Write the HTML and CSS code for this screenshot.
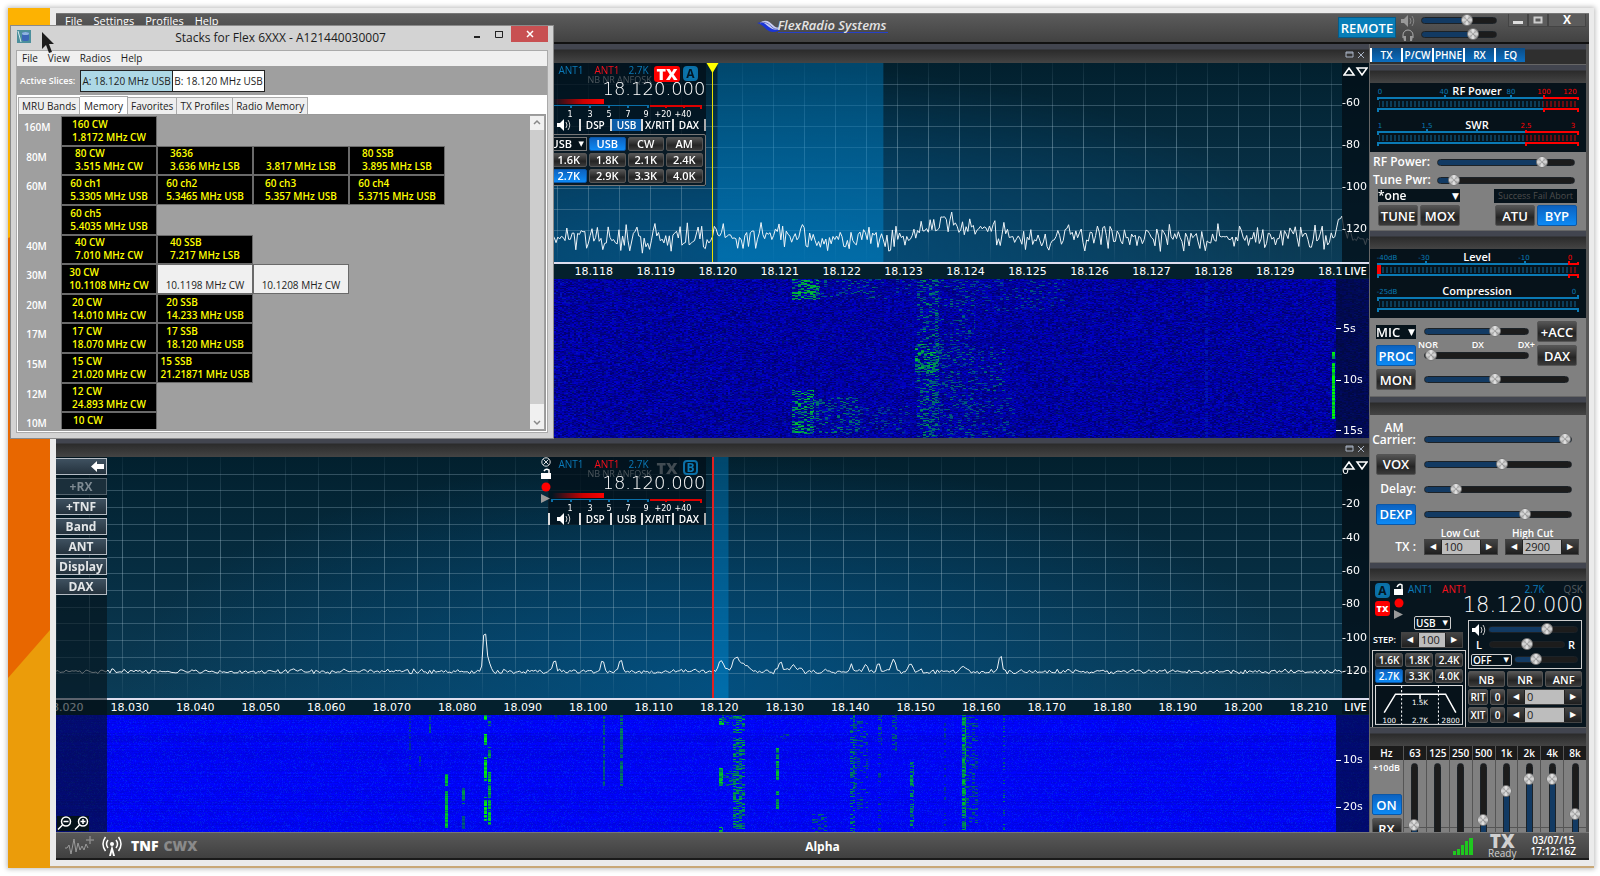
FILE: index.html
```html
<!DOCTYPE html>
<html lang="en">
<head>
<meta charset="utf-8">
<title>FlexRadio Systems</title>
<link rel="stylesheet" href="styles.css">
</head>
<body>
<div class="desktop">
  <svg class="wallpaper" viewBox="0 0 42 860" preserveAspectRatio="none" aria-hidden="true">
    <rect width="42" height="860" fill="#eb9c0a"/><path d="M0 0H42V622L0 670Z" fill="#e86700"/><path d="M0 0H42V215L0 230Z" fill="#fdb202"/>
  </svg>
  <div class="frame">
  <main class="app">
    <header class="titlebar">
      <nav class="app-menu"><a href="#">File</a><a href="#">Settings</a><a href="#">Profiles</a><a href="#">Help</a></nav>
      <div class="brand">
        <svg width="24" height="14" viewBox="0 0 24 14" aria-hidden="true"><path d="M0 3C5 1 9 3 13 6S20 10 24 9C20 13 13 13 9 9S4 4 0 3Z" fill="#1a35d8"/><path d="M4 2C9-1 13 2 16 5S21 8 24 7C21 11 16 10 12 7S8 3 4 2Z" fill="#c9cdf0"/><path d="M3 3C8 1 12 4 15 7S20 9 23 9" stroke="#6b74c8" fill="none"/></svg>
        <span>FlexRadio Systems</span>
      </div>
      <div class="title-right">
        <button class="remote">REMOTE</button>
        <div class="volumes">
          <svg width="14" height="12" viewBox="0 0 14 12" aria-hidden="true"><path d="M0 4H3L7 0V12L3 8H0Z" fill="#999"/><path d="M9 3Q11 6 9 9M11 1Q14.500 6 11 11" stroke="#888" fill="none"/></svg>
          <input type="range" aria-label="Speaker volume" value="63" style="--v:63">
          <svg width="14" height="12" viewBox="0 0 14 12" aria-hidden="true"><path d="M2 9V6A5 5 0 0 1 12 6V9" stroke="#aaa" fill="none"/><path d="M2 7H5V12H3ZM12 7H9V12H11Z" fill="#999"/></svg>
          <input type="range" aria-label="Headphone volume" value="73" style="--v:73">
        </div>
        <div class="win-buttons">
          <button aria-label="Minimize"><svg width="12" height="10" viewBox="0 0 12 10"><path d="M1 7.500H11" stroke="#ddd" stroke-width="3"/></svg></button><button aria-label="Maximize"><svg width="12" height="10" viewBox="0 0 12 10"><path d="M2.500 2.500H9.500V7.500H2.500Z" stroke="#ccc" stroke-width="2" fill="none"/></svg></button><button class="wide">X</button>
        </div>
      </div>
    </header>

    <div class="workspace">
      <section class="pan" id="pan-a">
        <header class="bar"><button aria-label="Pop out"><svg width="9" height="8" viewBox="0 0 9 8"><path d="M1 1H8V6H1ZM1 2H8" stroke="#a9b3c4" fill="none"/></svg></button><button aria-label="Close"><svg width="9" height="8" viewBox="0 0 9 8"><path d="M1 1L7 7M7 1L1 7" stroke="#a9b3c4" fill="none"/></svg></button></header>
        <div class="pan-body">
          <div class="plot">
            <canvas></canvas>
            <div class="flag">
              <div class="flag-top">
                <span class="blue">ANT1</span><span class="red">ANT1</span><span class="blue">2.7K</span>
                <small>NB NR ANFQSK</small>
                <b class="tx on">TX</b><b class="badge solid">A</b>
              </div>
              <div class="freq">18.120.000</div>
              <div class="smeter"></div>
              <svg class="sscale" width="158" height="14" viewBox="0 0 158 14"><path d="M4 3V0H100V3M23 0V3M42 0V3M61 0V3M80 0V3" stroke="#0a6fa8" stroke-width="2" fill="none"/><path d="M102 1H153V4M118 1V3M136 1V3" stroke="#d00" stroke-width="2" fill="none"/><g class="snum"><text x="22" y="12">1</text><text x="42" y="12">3</text><text x="61" y="12">5</text><text x="80" y="12">7</text><text x="98" y="12">9</text><text x="115" y="12">+20</text><text x="135" y="12">+40</text></g></svg>
              <div class="flag-tabs"><button aria-label="Audio"><svg width="14" height="12" viewBox="0 0 14 12"><path d="M0 4H3L7 0V12L3 8H0Z" fill="#fff"/><path d="M9 3Q11 6 9 9M11 1Q14.500 6 11 11" stroke="#ccc" fill="none"/></svg></button><button>DSP</button><button class="on">USB</button><button>X/RIT</button><button>DAX</button></div>
              <div class="mode-menu">
                <label class="sel dark"><select aria-label="Mode"><option>USB</option></select></label><button class="btn on">USB</button><button class="btn">CW</button><button class="btn">AM</button>
                <button class="btn">1.6K</button><button class="btn">1.8K</button><button class="btn">2.1K</button><button class="btn">2.4K</button>
                <button class="btn on">2.7K</button><button class="btn">2.9K</button><button class="btn">3.3K</button><button class="btn">4.0K</button>
              </div>
            </div>
            <div class="scale"><div class="updown"><svg width="25" height="9" viewBox="0 0 25 9"><path d="M6 1L11 8H1ZM19 8L24 1H14Z" stroke="#fff" stroke-width="1.500" fill="none"/></svg></div></div>
          </div>
          <div class="ruler"><span class="live">LIVE</span></div>
          <div class="fall"><canvas></canvas><div class="times"></div></div>
        </div>
      </section>

      <section class="pan" id="pan-b">
        <header class="bar"><button aria-label="Pop out"><svg width="9" height="8" viewBox="0 0 9 8"><path d="M1 1H8V6H1ZM1 2H8" stroke="#a9b3c4" fill="none"/></svg></button><button aria-label="Close"><svg width="9" height="8" viewBox="0 0 9 8"><path d="M1 1L7 7M7 1L1 7" stroke="#a9b3c4" fill="none"/></svg></button></header>
        <div class="pan-body">
          <div class="plot">
            <canvas></canvas>
            <div class="flag">
              <svg class="flag-icons" width="12" height="48" viewBox="0 0 12 48"><circle cx="6" cy="5" r="4.200" stroke="#ddd" fill="none"/><path d="M3.500 2.500L8.500 7.500M8.500 2.500L3.500 7.500" stroke="#ddd"/><path d="M4 14Q6 11 9 13V17" stroke="#fff" stroke-width="1.500" fill="none"/><rect x="1" y="16" width="10" height="6" fill="#fff"/><circle cx="6" cy="30" r="4.500" fill="#f00"/><path d="M1 37L10 41.500L1 46Z" fill="#999"/></svg>
              <div class="flag-top">
                <span class="blue">ANT1</span><span class="red">ANT1</span><span class="blue">2.7K</span>
                <small>NB NR ANFQSK</small>
                <b class="tx">TX</b><b class="badge">B</b>
              </div>
              <div class="freq">18.120.000</div>
              <div class="smeter"></div>
              <svg class="sscale" width="158" height="14" viewBox="0 0 158 14"><path d="M4 3V0H100V3M23 0V3M42 0V3M61 0V3M80 0V3" stroke="#0a6fa8" stroke-width="2" fill="none"/><path d="M102 1H153V4M118 1V3M136 1V3" stroke="#d00" stroke-width="2" fill="none"/><g class="snum"><text x="22" y="12">1</text><text x="42" y="12">3</text><text x="61" y="12">5</text><text x="80" y="12">7</text><text x="98" y="12">9</text><text x="115" y="12">+20</text><text x="135" y="12">+40</text></g></svg>
              <div class="flag-tabs"><button aria-label="Audio"><svg width="14" height="12" viewBox="0 0 14 12"><path d="M0 4H3L7 0V12L3 8H0Z" fill="#fff"/><path d="M9 3Q11 6 9 9M11 1Q14.500 6 11 11" stroke="#ccc" fill="none"/></svg></button><button>DSP</button><button>USB</button><button>X/RIT</button><button>DAX</button></div>
            </div>
            <div class="scale"><div class="updown"><svg width="25" height="9" viewBox="0 0 25 9"><path d="M6 1L11 8H1ZM19 8L24 1H14Z" stroke="#fff" stroke-width="1.500" fill="none"/></svg></div></div>
          </div>
          <div class="ruler"><span class="live">LIVE</span></div>
          <div class="fall"><canvas></canvas><div class="times"></div></div>
          <div class="tools">
            <button class="arrow" aria-label="Collapse"><svg width="13" height="11" viewBox="0 0 13 11"><path d="M0 5.500L6 0V3H13V8H6V11Z" fill="#fff"/></svg></button>
            <button disabled>+RX</button><button>+TNF</button><button>Band</button><button>ANT</button><button>Display</button><button>DAX</button>
            <svg class="zooms" width="32" height="15" viewBox="0 0 32 15"><g stroke="#fff" stroke-width="1.500" fill="none"><circle cx="9" cy="5.500" r="4.500"/><path d="M6.500 5.500H11.500M5.500 9L1 13.500"/><circle cx="26" cy="5.500" r="4.500"/><path d="M23.500 5.500H28.500M26 3V8M22.500 9L18 13.500"/></g></svg>
          </div>
        </div>
      </section>

      <aside class="side">
        <nav class="side-tabs"><button>TX</button><button>P/CW</button><button>PHNE</button><button>RX</button><button>EQ</button></nav>
        <div class="bar"></div>
        <svg class="meters" viewBox="0 0 216 69">
          <defs><pattern id="tick" width="4" height="6" patternUnits="userSpaceOnUse"><rect width="2" height="6" fill="#0b3c58"/></pattern><pattern id="tickr" width="4" height="6" patternUnits="userSpaceOnUse"><rect width="2" height="6" fill="#6a0c10"/></pattern></defs>
          <g stroke="#0a7ab5" stroke-width="2" fill="none"><path d="M8 17V14M8 15H173M75 12V15M141 12V15M8 29V26H173"/><path d="M8 52V48M8 49H155M57 46V49M107 46V49M8 63V60H155"/></g>
          <g stroke="#f00" stroke-width="2" fill="none"><path d="M173 15H208V17M174 12V15M173 26H208V29M174 26V29"/><path d="M155 49H208V52M156 47V49M155 60H208V63M156 60V63"/></g>
          <rect x="9" y="18" width="164" height="6" fill="url(#tick)"/><rect x="173" y="18" width="34" height="6" fill="url(#tickr)"/>
          <rect x="9" y="52" width="146" height="6" fill="url(#tick)"/><rect x="155" y="52" width="52" height="6" fill="url(#tickr)"/>
          <g class="mnum"><text x="10" y="11">0</text><text x="74" y="11">40</text><text x="141" y="11">80</text><text x="10" y="45">1</text><text x="57" y="45">1.5</text></g>
          <g class="mnum hot"><text x="174" y="11">100</text><text x="200" y="11">120</text><text x="156" y="45">2.5</text><text x="203" y="45">3</text></g>
          <g class="mtitle"><text x="107" y="12">RF Power</text><text x="107" y="46">SWR</text></g>
        </svg>
        <div class="panel tx-panel">
          <div class="line"><label for="rfp">RF Power:</label><input id="rfp" type="range" value="79" style="--v:79"></div>
          <div class="line"><label for="tnp">Tune Pwr:</label><input id="tnp" type="range" value="8" style="--v:8"></div>
          <div class="split low"><label class="sel black"><select aria-label="TX profile"><option>*one</option></select></label><span class="atu-state">Success Fail Abort</span></div>
          <div class="split"><span><button class="btn">TUNE</button><button class="btn">MOX</button></span><span><button class="btn">ATU</button><button class="btn on">BYP</button></span></div>
        </div>
        <div class="bar"></div>
        <svg class="meters" viewBox="0 0 216 69">
          <g stroke="#0a7ab5" stroke-width="2" fill="none"><path d="M8 18V14M8 15H199M56 12V15M155 12V15M8 29V26H198"/><path d="M8 52V48M8 49H208V46M8 63V60H208V63"/></g>
          <path d="M199 12V15H208V13M199 29V26H208V29" stroke="#f00" stroke-width="2" fill="none"/>
          <rect x="9" y="18" width="190" height="6" fill="url(#tick)"/><rect x="199" y="18" width="9" height="6" fill="url(#tickr)"/><rect x="7" y="16" width="4" height="9" fill="#f00"/>
          <rect x="9" y="52" width="199" height="6" fill="url(#tick)"/>
          <g class="mnum"><text x="17" y="11">-40dB</text><text x="54" y="11">-30</text><text x="154" y="11">-10</text><text x="17" y="45">-25dB</text><text x="204" y="45">0</text></g>
          <g class="mnum hot"><text x="200" y="11">0</text></g>
          <g class="mtitle"><text x="107" y="12">Level</text><text x="107" y="46">Compression</text></g>
        </svg>
        <div class="panel mic-panel">
          <label class="sel black"><select aria-label="Input"><option>MIC</option></select></label><input type="range" aria-label="Mic level" value="70" style="--v:70"><button class="btn">+ACC</button>
          <button class="btn on">PROC</button><div class="proc"><div><span>NOR</span><span>DX</span><span>DX+</span></div><input type="range" aria-label="Processor" value="0" style="--v:0"></div><button class="btn">DAX</button>
          <button class="btn">MON</button><input class="long" type="range" aria-label="Monitor level" value="49" style="--v:49">
        </div>
        <div class="bar"></div>
        <div class="panel phone-panel">
          <label class="am" for="amc">AM<br>Carrier:</label><input class="am-range" id="amc" type="range" value="100" style="--v:100">
          <button class="btn">VOX</button><input type="range" aria-label="VOX level" value="53" style="--v:53">
          <label for="dly">Delay:</label><input id="dly" type="range" value="19" style="--v:19">
          <button class="btn on">DEXP</button><input type="range" aria-label="DEXP level" value="70" style="--v:70">
          <div class="cuts"><label for="lc">Low Cut</label><label for="hc">High Cut</label></div>
          <span class="txl">TX :</span><div class="cut-row"><div class="spin"><button aria-label="Lower">◀</button><input id="lc" value="100"><button aria-label="Raise">▶</button></div><div class="spin"><button aria-label="Lower">◀</button><input id="hc" value="2900"><button aria-label="Raise">▶</button></div></div>
        </div>
        <div class="bar"></div>
        <div class="rx-panel">
          <div class="rx-head">
            <div class="rx-badges"><b class="badge solid">A</b><b class="tx on">TX</b></div>
            <svg width="12" height="38" viewBox="0 0 12 38"><path d="M4 4Q6 0 9 2V7" stroke="#fff" stroke-width="1.500" fill="none"/><rect x="1" y="6" width="9" height="6" fill="#fff"/><circle cx="6" cy="20" r="4.500" fill="#f00"/><path d="M1 27L10 31.500L1 36Z" fill="#999"/></svg>
            <div class="rx-info"><div class="rx-ants"><span class="blue">ANT1</span><span class="red">ANT1</span><span class="blue bw">2.7K</span><span class="gray">QSK</span></div><div class="freq big">18.120.000</div></div>
          </div>
          <div class="rx-cols">
            <div class="rx-left">
              <label class="sel line-sel"><select aria-label="RX mode"><option>USB</option></select></label>
              <div class="step"><label for="stp">STEP:</label><div class="spin"><button aria-label="Lower">◀</button><input id="stp" value="100"><button aria-label="Raise">▶</button></div></div>
              <div class="filters">
                <button class="btn">1.6K</button><button class="btn">1.8K</button><button class="btn">2.4K</button><button class="btn on">2.7K</button><button class="btn">3.3K</button><button class="btn">4.0K</button>
                <svg viewBox="0 0 86 39"><rect x="0.500" y="0.500" width="85" height="38" fill="#06121a" stroke="#ddd"/><path d="M26 1V38M62 1V38" stroke="#fff" stroke-dasharray="2 2"/><path d="M9 27L20 9H69L79 27M44 9V14" stroke="#fff" stroke-width="1.500" fill="none"/><g class="fnum"><text x="44" y="20">1.5K</text><text x="14" y="37">100</text><text x="44" y="37">2.7K</text><text x="74" y="37">2800</text></g></svg>
              </div>
            </div>
            <div class="rx-right">
              <div class="audio">
                <svg width="14" height="12" viewBox="0 0 14 12"><path d="M0 4H3L7 0V12L3 8H0Z" fill="#fff"/><path d="M9 3Q11 6 9 9M11 1Q14.500 6 11 11" stroke="#ccc" fill="none"/></svg><input type="range" aria-label="RX volume" value="68" style="--v:68">
                <div class="panrow"><span>L</span><input type="range" class="balance" aria-label="Balance" value="50" style="--v:0"><span>R</span></div>
                <label class="sel line-sel"><select aria-label="AGC"><option>OFF</option></select></label><input type="range" aria-label="AGC level" value="30" style="--v:30">
              </div>
              <div class="three"><button class="btn">NB</button><button class="btn">NR</button><button class="btn">ANF</button></div>
              <div class="rit"><button class="btn">RIT</button><button class="btn">0</button><div class="spin"><button aria-label="Lower">◀</button><input aria-label="RIT offset" value="0"><button aria-label="Raise">▶</button></div></div>
              <div class="rit"><button class="btn">XIT</button><button class="btn">0</button><div class="spin"><button aria-label="Lower">◀</button><input aria-label="XIT offset" value="0"><button aria-label="Raise">▶</button></div></div>
            </div>
          </div>
        </div>
        <div class="bar"></div>
        <div class="eq">
          <div class="eq-col first"><span>Hz</span><small>+10dB</small><button class="btn on">ON</button><button class="btn">RX</button></div>
          <div class="eq-col"><label for="e1">63</label><input id="e1" type="range" value="53" style="--v:53"></div>
          <div class="eq-col"><label for="e2">125</label><input id="e2" type="range" value="20" style="--v:20"></div>
          <div class="eq-col"><label for="e3">250</label><input id="e3" type="range" value="20" style="--v:20"></div>
          <div class="eq-col"><label for="e4">500</label><input id="e4" type="range" value="58" style="--v:58"></div>
          <div class="eq-col"><label for="e5">1k</label><input id="e5" type="range" value="82" style="--v:82"></div>
          <div class="eq-col"><label for="e6">2k</label><input id="e6" type="range" value="92" style="--v:92"></div>
          <div class="eq-col"><label for="e7">4k</label><input id="e7" type="range" value="92" style="--v:92"></div>
          <div class="eq-col"><label for="e8">8k</label><input id="e8" type="range" value="63" style="--v:63"></div>
        </div>
      </aside>
    </div>

    <footer class="status">
      <div class="status-left">
        <svg width="32" height="22" viewBox="0 0 32 22" aria-hidden="true"><path d="M1 13H3L5 10L7 19L10 4L12 17L14 8L16 15L18 11L20 15L22 9L24 13" stroke="#999" fill="none"/><path d="M22 5H30M26 1V9" stroke="#888" stroke-width="1.500"/></svg>
        <svg width="22" height="22" viewBox="0 0 22 22" aria-hidden="true"><path d="M11 10L14 21H12L11 17L10 21H8Z" fill="#fff"/><circle cx="11" cy="9" r="2" fill="#fff"/><path d="M7 13Q4 9 7 5M15 13Q18 9 15 5M4.500 16Q-0.500 9 4.500 2M17.500 16Q22.500 9 17.500 2" stroke="#fff" stroke-width="1.500" fill="none"/></svg>
        <b>TNF</b><b class="off">CWX</b>
      </div>
      <div class="station">Alpha</div>
      <div class="status-right">
        <svg width="21" height="18" viewBox="0 0 21 18" aria-hidden="true"><path d="M0 14H3V18H0ZM4 12H7V18H4ZM8 8H11V18H8ZM12 4H15V18H12ZM16 1H20V18H16Z" fill="#1fc81f"/></svg>
        <div class="ready"><b>TX</b><span>Ready</span></div>
        <div class="clock">03/07/15<br>17:12:16Z</div>
      </div>
    </footer>
  </main>
  </div>

  <section class="stacks">
    <header class="st-title">
      <svg width="14" height="13" viewBox="0 0 14 13" aria-hidden="true"><rect width="14" height="13" fill="#4c8f9c"/><rect x="5" y="2" width="7" height="9" rx="2" fill="#3b66b8"/><ellipse cx="8.500" cy="3.500" rx="3.500" ry="1.500" fill="#8fb4e0"/><path d="M1 1L4 12" stroke="#d5ecef"/></svg>
      <h1>Stacks for Flex 6XXX - A121440030007</h1>
      <button aria-label="Minimize"><svg width="10" height="10" viewBox="0 0 10 10"><path d="M2 8H8" stroke="#222" stroke-width="2"/></svg></button><button aria-label="Maximize"><svg width="10" height="10" viewBox="0 0 10 10"><path d="M1 2.500H9M1.500 2V8.500H8.500V2" stroke="#222" fill="none"/></svg></button><button class="x" aria-label="Close"><svg width="8" height="8" viewBox="0 0 8 8"><path d="M1 1L7 7M7 1L1 7" stroke="#fff" stroke-width="1.500"/></svg></button>
    </header>
    <div class="st-body">
      <nav class="st-menu"><a href="#">File</a><a href="#">View</a><a href="#">Radios</a><a href="#">Help</a></nav>
      <div class="slices"><span>Active Slices:</span><button class="cur">A: 18.120 MHz USB</button><button>B: 18.120 MHz USB</button></div>
      <div class="tabs" role="tablist"><button role="tab">MRU Bands</button><button role="tab" class="cur">Memory</button><button role="tab">Favorites</button><button role="tab">TX Profiles</button><button role="tab">Radio Memory</button></div>
      <div class="mem-view">
        <div class="mem-clip"><div class="mem-list">
          <div><span>160M</span><button><i>160 CW<br>1.8172 MHz CW</i></button></div>
          <div><span>80M</span><button><i>80 CW<br>3.515 MHz CW</i></button><button><i>3636<br>3.636 MHz LSB</i></button><button><i>&nbsp;<br>3.817 MHz LSB</i></button><button><i>80 SSB<br>3.895 MHz LSB</i></button></div>
          <div><span>60M</span><button><i>60 ch1<br>5.3305 MHz USB</i></button><button><i>60 ch2<br>5.3465 MHz USB</i></button><button><i>60 ch3<br>5.357 MHz USB</i></button><button><i>60 ch4<br>5.3715 MHz USB</i></button></div>
          <div><span></span><button><i>60 ch5<br>5.4035 MHz USB</i></button></div>
          <div><span>40M</span><button><i>40 CW<br>7.010 MHz CW</i></button><button><i>40 SSB<br>7.217 MHz LSB</i></button></div>
          <div><span>30M</span><button><i>30 CW<br>10.1108 MHz CW</i></button><button class="plain"><i>&nbsp;<br>10.1198 MHz CW</i></button><button class="plain"><i>&nbsp;<br>10.1208 MHz CW</i></button></div>
          <div><span>20M</span><button><i>20 CW<br>14.010 MHz CW</i></button><button><i>20 SSB<br>14.233 MHz USB</i></button></div>
          <div><span>17M</span><button><i>17 CW<br>18.070 MHz CW</i></button><button><i>17 SSB<br>18.120 MHz USB</i></button></div>
          <div><span>15M</span><button><i>15 CW<br>21.020 MHz CW</i></button><button><i>15 SSB<br>21.21871 MHz USB</i></button></div>
          <div><span>12M</span><button><i>12 CW<br>24.893 MHz CW</i></button></div>
          <div><span>10M</span><button><i>10 CW<br>&nbsp;</i></button></div>
        </div></div>
        <div class="sbar"><svg width="14" height="14" viewBox="0 0 14 14"><path d="M4 8L7 5L10 8" stroke="#888" stroke-width="1.500" fill="none"/></svg><div></div><svg width="14" height="25" viewBox="0 0 14 25"><path d="M4 17L7 20L10 17" stroke="#888" stroke-width="1.500" fill="none"/></svg></div>
      </div>
    </div>
  </section>
  <svg class="cursor" width="14" height="24" viewBox="0 0 14 24" aria-hidden="true"><path d="M1 1V18L5 14L8 22L11 21L8 13H13Z" fill="#1c1c1c"/></svg>
</div>
<script src="panadapter.js"></script>
</body>
</html>
```
FILE: styles.css
```css
* { box-sizing: border-box; }
body { margin: 0; background: #fff; font-family: "Open Sans", "Noto Sans", sans-serif; font-size: 13px; color: #fff; overflow: hidden; }
button, input, select { font: inherit; color: inherit; border: 0; padding: 0; margin: 0; min-width: 0; }
a { color: inherit; text-decoration: none; }
svg { display: block; flex: none; }
canvas { display: block; position: absolute; inset: 0; width: 100%; height: 100%; }

.desktop { position: relative; height: calc(100vh - 16px); margin: 8px 6px 8px 8px; padding: 0 0 2px 42px; background: #c9a877; box-shadow: 0 0 5px 1px #bbb; }
.wallpaper { position: absolute; left: 0; top: 0; width: 42px; height: 100%; }
.frame { height: 100%; padding: 5px 5px 6px 6px; background: #ebebeb; }
.app { display: flex; flex-direction: column; height: 100%; background: #333; }

.titlebar { flex: none; height: 31px; display: grid; grid-template-columns: 1fr auto 1fr; background: linear-gradient(#5b5b5b, #424242); border-bottom: 2px solid #111; border-top: 1px solid #777; }
.app-menu { display: flex; gap: 11px; padding-left: 9px; font-size: 11px; line-height: 14px; }
.brand { display: flex; height: 22px; padding-top: 2px; }
.brand svg { margin-top: 4px; }
.brand span { font-size: 13px; font-weight: 600; font-style: italic; line-height: 18px; height: 17px; border-bottom: 1px solid #2740c8; color: #e4e4e4; margin-left: -3px; padding-right: 2px; }
.title-right { display: flex; justify-content: flex-end; }
.remote { width: 58px; height: 21px; margin-top: 3px; background: #087eb8; border: 1px solid #065b88; font-weight: 600; }
.volumes { display: grid; grid-template-columns: 14px 76px; gap: 0 6px; padding: 0 11px 0 5px; align-content: start; }
.volumes > * { height: 14px; }
.win-buttons { display: flex; padding-right: 3px; height: 13px; }
.win-buttons button { width: 20px; display: grid; place-items: center; background: #5c5c5c; border: 1px solid #444; border-top: 0; font-size: 12px; font-weight: 700; line-height: 10px; }
.win-buttons .wide { width: 38px; }

.workspace { flex: 1; min-height: 0; display: grid; grid-template-columns: 1fr 219px; grid-template-rows: 1fr 1fr; }
.bar { flex: none; height: 19px; display: flex; justify-content: flex-end; gap: 3px; padding: 6px 3px 0 0; background: linear-gradient(#42454f 0 5px, #2b2b2b 6px, #444 100%); }
.bar button { background: none; height: 10px; }

.pan { grid-column: 1; display: flex; flex-direction: column; min-height: 0; min-width: 0; border-right: 1px solid #666; }
.pan-body { position: relative; flex: 1; display: flex; flex-direction: column; min-height: 0; }
.plot { position: relative; flex: 200 0 0; border-bottom: 2px solid #dde; background: radial-gradient(ellipse 45% 95% at 50% 95%, rgba(0, 88, 145, 0.7), transparent), linear-gradient(#02202e, #0b3c57); }
.ruler { position: relative; flex: none; height: 15px; overflow: hidden; background: #04202d; font: 11px/15px "DejaVu Sans", sans-serif; }
.ruler span { position: absolute; }
.ruler .live { right: 0; width: 27px; text-align: center; background: #04151e; font: 600 11px/14px "Open Sans", sans-serif; }
.fall { position: relative; flex: 159 0 0; background: #0000a8; }
#pan-b .plot { flex-grow: 241; }
#pan-b .fall { flex-grow: 117; }
.scale { position: absolute; right: 0; top: 0; bottom: 0; width: 27px; background: rgba(3, 14, 22, 0.75); font: 11px/12px "DejaVu Sans", sans-serif; overflow: hidden; }
.scale span { position: absolute; left: 0; margin-top: -6px; white-space: nowrap; }
.updown { position: absolute; z-index: 1; top: 4px; left: 1px; background: #04151e; }
.times { position: absolute; right: 0; top: 0; bottom: 0; width: 33px; background: rgba(2, 14, 40, 0.65); font: 11px/12px "DejaVu Sans", sans-serif; }
.times span { position: absolute; left: 0; margin-top: -6px; display: flex; align-items: center; gap: 2px; }
.times span::before { content: ""; width: 5px; height: 1px; background: #fff; }

.tools { position: absolute; left: 0; top: 0; bottom: 0; width: 51px; display: flex; flex-direction: column; gap: 3px; padding: 1px 0; background: rgba(5, 16, 24, 0.6); }
.tools button { flex: none; height: 17px; background: linear-gradient(#3f5160, #24323d); border: 1px solid #b5bcc4; border-left: 0; color: #e3e6e8; font-size: 12px; font-weight: 700; line-height: 14px; text-align: center; }
.tools .arrow { display: flex; justify-content: flex-end; align-items: center; padding-right: 2px; }
.tools button:disabled { color: #7e8a92; border-color: #55646e; background: #1b2f3b; }
.tools .zooms { margin-top: auto; margin-left: 1px; background: #04121a; }

.flag { position: absolute; top: 0; right: calc(50% + 7px); width: 158px; background: rgba(2, 16, 26, 0.8); }
.flag-icons { position: absolute; left: -8px; top: 0; }
.flag-top { display: grid; grid-template-columns: 36px 34px 24px 29px 18px; grid-template-rows: 13px 7px; padding-left: 11px; font-size: 10px; line-height: 14px; }
.flag-top small { grid-row: 2; grid-column: 1 / 4; padding-left: 29px; font-size: 9px; line-height: 7px; color: #4c565c; white-space: nowrap; }
.tx { grid-row: 1 / 3; color: #414b52; font-size: 16px; font-weight: 800; line-height: 16px; margin: 3px 0 0 2px; align-self: start; }
.flag-top .tx { grid-column: 4; justify-self: center; padding: 0 2px; margin-left: 0; }
.flag-top .badge { grid-column: 5; grid-row: 1 / 3; margin-top: 3px; justify-self: center; }
.tx.on { background: #f00; color: #fff; border-radius: 3px; }
.badge { width: 15px; height: 15px; border: 2px solid #0b6fa6; border-radius: 4px; color: #0b7ab5; font-size: 12px; line-height: 11px; text-align: center; }
.badge.solid { background: #0b74ac; color: #031522; }
.blue { color: #0b7ab8; } .red { color: #f5101c; } .gray { color: #555c60; }
.freq { font: 200 18px/11px "DejaVu Sans", sans-serif; color: #fff; text-align: right; height: 13px; margin-bottom: 3px; }
.smeter { width: 52px; height: 5px; margin-left: 4px; background: linear-gradient(90deg, transparent, #c00 60%, #f00); }
.sscale { margin-top: 1px; }
.snum text { font: 8px "DejaVu Sans", sans-serif; fill: #fff; text-anchor: middle; }
.flag-tabs { display: grid; grid-template-columns: repeat(5, 1fr); height: 12px; border-right: 2px solid #aaa; }
.flag-tabs button { display: grid; place-items: center; background: none; border-left: 2px solid #ddd; font-size: 10px; font-weight: 600; line-height: 12px; white-space: nowrap; }
.flag-tabs .on { background: #0c5da8; }
.mode-menu { display: grid; grid-template-columns: repeat(4, 1fr); grid-auto-rows: 14px; gap: 2px; margin-top: 3px; padding: 2px; border: 1px solid #777; border-radius: 2px; background: #0a1b26; }
.mode-menu .btn { width: auto; height: 14px; font-size: 11px; line-height: 12px; }

.btn { width: 40px; height: 21px; background: linear-gradient(#555, #242424 60%, #3a3a3a); border: 1px solid #555; border-radius: 2px; font-size: 13px; font-weight: 600; line-height: 18px; white-space: nowrap; overflow: hidden; }
.btn.on { background: linear-gradient(#0c62c0, #0d8af5); border-color: #0b57a6; }
.sel { position: relative; display: block; }
.sel::after { content: "▼"; position: absolute; right: 1px; top: 0; height: 100%; display: flex; align-items: center; font: 9px "DejaVu Sans", sans-serif; pointer-events: none; }
.sel select { appearance: none; width: 100%; height: 100%; display: block; background: #06131b; }
.sel.dark, .sel.line-sel { font-size: 11px; font-weight: 600; line-height: 12px; }
.sel.dark::after, .sel.line-sel::after { font-size: 7px; right: 3px; }
.sel.dark select { border: 1px solid #777; border-left: 0; }
.sel.line-sel select { border: 1px solid #ccc; border-radius: 2px; padding-left: 1px; }

input[type="range"] { appearance: none; background: none; width: 100%; height: 13px; display: block; }
input[type="range"]::-webkit-slider-runnable-track { height: 7px; border-radius: 4px; border: 1px solid #1c2227; background: linear-gradient(90deg, #123a63 calc(var(--v) * 1%), #1c1c1c 0); }
input[type="range"]::-webkit-slider-thumb { appearance: none; width: 12px; height: 12px; margin-top: -4px; border-radius: 50%; border: 1px solid #777; background: conic-gradient(#eee, #aaa, #ddd, #999, #eee, #aaa, #ddd, #aaa, #eee); }

.side { grid-column: 2; grid-row: 1 / 3; display: flex; flex-direction: column; min-height: 0; overflow: hidden; border-right: 3px solid #555; background: #2d2d2d; }
.side > * { flex: none; }
.side .bar { border-top: 1px solid #666; }
.side-tabs { height: 20px; padding: 4px 0 2px; display: flex; background: linear-gradient(#42454f 0 5px, #2f2f2f 6px); }
.side-tabs button { width: 31px; background: linear-gradient(#0a4c86, #0c6ec0); border-left: 2px solid #fff; font-size: 10px; font-weight: 600; line-height: 13px; }
.meters { width: 100%; background: #06121a; }
.mnum text { font: 7px "DejaVu Sans", sans-serif; fill: #0a7ab5; text-anchor: middle; }
.mnum.hot text { fill: #f00; }
.mtitle text { font: 600 11px "Open Sans", sans-serif; fill: #fff; text-anchor: middle; }
.panel { background: #808080; }
.tx-panel { height: 78px; padding-top: 1px; }
.line { display: grid; grid-template-columns: 64px 1fr; align-items: center; height: 18px; padding: 0 11px 0 3px; line-height: 18px; font-size: 12px; font-weight: 600; }
.split { display: flex; justify-content: space-between; padding: 0 9px 0 8px; }
.split span { display: flex; gap: 2px; }
.split.low { height: 14px; margin-bottom: 2px; }
.split .sel { width: 82px; height: 13px; line-height: 13px; font-size: 12px; }
.sel.black { font-weight: 600; }
.split .atu-state { width: 83px; background: #07131b; color: #4d4d4d; font-size: 9px; line-height: 13px; justify-content: center; white-space: nowrap; }
.mic-panel { height: 78px; display: grid; grid-template-columns: 40px 1fr 40px; grid-auto-rows: 21px; gap: 3px 8px; padding: 3px 9px 5px 6px; align-items: center; }
.mic-panel .sel { height: 14px; line-height: 14px; }
.mic-panel .long { grid-column: 2 / 4; width: calc(100% - 8px); }
.proc div { display: flex; justify-content: space-between; margin: -9px -6px 0; font-size: 9px; font-weight: 600; line-height: 9px; }
.phone-panel { height: 147px; display: grid; grid-template-columns: 40px 1fr; grid-template-rows: 30px 30px 20px 30px 9px 17px; column-gap: 8px; padding: 4px 7px 0 6px; align-items: center; font-size: 12px; font-weight: 600; }
.phone-panel > label { text-align: right; line-height: 12px; white-space: nowrap; }
.phone-panel .am { display: grid; justify-items: center; text-align: center; margin-left: -4px; }
.phone-panel > input { width: calc(100% - 7px); }
.phone-panel .am-range { align-self: end; margin-bottom: 3px; }
.phone-panel .cuts { grid-column: 2; display: grid; grid-template-columns: 1fr 1fr; justify-items: center; padding-right: 10px; font-size: 10px; line-height: 9px; }
.txl { text-align: right; }
.cut-row { display: flex; justify-content: space-between; }
.spin { display: grid; grid-template-columns: 16px 1fr 16px; height: 16px; width: 74px; gap: 1px; background: #222; border: 1px solid #444; }
.spin button { background: linear-gradient(#444, #1e1e1e); font: 8px/12px "DejaVu Sans", sans-serif; }
.spin input { width: 100%; background: #bdbdbd; color: #222; font-size: 11px; font-weight: 400; line-height: 14px; padding-left: 2px; }

.rx-panel { height: 146px; background: #07151e; }
.rx-head { display: flex; height: 35px; padding: 2px 3px 0 5px; gap: 3px; }
.rx-badges { display: flex; flex-direction: column; gap: 3px; }
.rx-badges .tx { margin: 0; width: 15px; height: 15px; font-size: 9px; line-height: 15px; text-align: center; }
.rx-info { flex: 1; }
.rx-ants { display: flex; gap: 9px; font-size: 10px; line-height: 12px; height: 15px; }
.rx-ants .bw { margin-left: auto; margin-right: 10px; }
.freq.big { font-size: 21px; line-height: 15px; }
.rx-cols { display: grid; grid-template-columns: 94px 1fr; gap: 2px; padding: 0 4px 0 2px; }
.rx-left .sel { width: 37px; height: 14px; margin-left: 42px; }
.rx-left .line-sel { font-size: 10px; }
.step { display: flex; justify-content: space-between; margin: 2px 3px 2px 1px; font-size: 9px; font-weight: 600; line-height: 16px; }
.step .spin { width: 62px; }
.filters { display: grid; grid-template-columns: repeat(3, 1fr); gap: 2px; padding: 2px; border: 1px solid #ccc; }
.filters .btn { width: auto; height: 14px; font-size: 10px; line-height: 12px; }
.filters svg { grid-column: 1 / 4; width: 100%; }
.fnum text { font: 7px "DejaVu Sans", sans-serif; fill: #fff; text-anchor: middle; }
.rx-right { padding-top: 4px; }
.audio { display: grid; grid-template-columns: 14px 24px 1fr; grid-auto-rows: 15px; align-items: center; gap: 0 2px; border: 1px solid #ccc; padding: 1px 3px; margin-bottom: 2px; height: 49px; }
.audio > input { grid-column: 2 / 4; }
.audio > .sel { grid-column: 1 / 3; height: 12px; font-size: 10px; line-height: 10px; margin-left: -1px; }
.audio > .sel + input { grid-column: 3; }
.panrow { grid-column: 1 / 4; display: grid; grid-template-columns: 10px 76px 10px; justify-content: space-between; align-items: center; padding-left: 4px; font-size: 11px; font-weight: 600; line-height: 14px; }
.three { display: grid; grid-template-columns: repeat(3, 1fr); gap: 2px; margin-bottom: 2px; }
.three .btn { width: auto; height: 16px; font-size: 11px; line-height: 13px; }
.rit { display: grid; grid-template-columns: 20px 15px 1fr; gap: 2px; margin-bottom: 2px; }
.rit .btn { width: auto; height: 16px; font-size: 10px; line-height: 13px; }
.rit .spin { width: auto; }

.eq { display: grid; grid-template-columns: 33px repeat(8, 1fr); height: 160px; background: #808080; }
.eq-col { display: flex; flex-direction: column; align-items: center; border-left: 1px solid #555; background: linear-gradient(transparent 81px, #555 81px 82px, transparent 82px); }
.eq-col.first { border-left: 0; background: none; }
.eq-col label, .eq-col > span { width: 100%; height: 14px; background: #1b1b1b; font-size: 10px; font-weight: 600; line-height: 14px; text-align: center; }
.eq-col small { font-size: 9px; font-weight: 600; line-height: 16px; margin-bottom: 18px; }
.eq-col .btn { width: 30px; margin-bottom: 3px; }
.eq-col input[type="range"] { writing-mode: vertical-lr; direction: rtl; width: 13px; height: 132px; margin-top: 3px; }
.eq-col input[type="range"]::-webkit-slider-runnable-track { width: 7px; height: 100%; background: linear-gradient(0deg, #123a63 calc(var(--v) * 1%), #1c1c1c 0); }
.eq-col input[type="range"]::-webkit-slider-thumb { margin-top: 0; margin-left: -4px; }

.status { flex: none; height: 28px; display: grid; grid-template-columns: 1fr auto 1fr; align-items: center; background: linear-gradient(#585858, #404040); border-top: 1px solid #777; border-bottom: 2px solid #1a1a1a; }
.status-left { display: flex; align-items: center; gap: 5px; padding-left: 8px; }
.status-left b { font-size: 14px; font-weight: 800; }
.status-left b:first-of-type { margin-left: 3px; }
.status-left .off { color: #8a8a8a; }
.station { font-size: 12px; font-weight: 700; padding-top: 2px; }
.status-right { display: flex; justify-content: flex-end; align-items: center; gap: 14px; padding-right: 13px; }
.ready { display: grid; justify-items: center; color: #d0d0d0; }
.ready b { font-size: 19px; font-weight: 800; line-height: 14px; }
.ready span { font-size: 10px; line-height: 10px; }
.clock { font-size: 10px; font-weight: 600; line-height: 11px; text-align: center; }

.stacks { position: absolute; left: 2px; top: 17px; width: 544px; height: 414px; display: flex; flex-direction: column; padding: 0 5px 5px; background: #d3d3d3; border: 1px solid #8a8a8a; color: #1c1c1c; font-size: 11px; }
.st-title { flex: none; height: 24px; display: flex; align-items: flex-start; }
.st-title > svg { margin: 4px 0 0 1px; }
.st-title h1 { flex: 1; margin: 0; padding-left: 64px; text-align: center; font-size: 12px; font-weight: 400; line-height: 24px; }
.st-title button { width: 22px; height: 16px; display: grid; place-items: center; background: none; }
.st-title .x { width: 37px; background: #c85052; margin-left: 1px; }
.st-body { flex: 1; min-height: 0; display: flex; flex-direction: column; border: 1px solid #aaa; background: #fff; }
.st-menu { flex: none; height: 15px; display: flex; gap: 10px; padding-left: 5px; background: #f0f0f0; font-size: 10px; line-height: 15px; }
.slices { flex: none; height: 29px; display: flex; align-items: center; padding-left: 3px; background: #9f9f9f; }
.slices span { width: 60px; color: #fff; font-size: 9px; font-weight: 600; white-space: nowrap; }
.slices button { width: 93px; height: 22px; background: #fff; border: 1px solid #222; font-size: 10px; white-space: nowrap; }
.slices button + button { margin-left: -1px; }
.slices .cur { background: #add8e6; }
.tabs { flex: none; display: flex; align-items: flex-end; height: 19px; padding-left: 1px; font-size: 10px; }
.tabs button { height: 17px; padding: 0 3px; background: #eee; border: 1px solid #aaa; border-bottom: 0; border-left-width: 0; white-space: nowrap; }
.tabs button:first-child { border-left-width: 1px; }
.tabs .cur { height: 18px; background: #fff; padding: 0 4px; }
.mem-view { flex: 1; min-height: 0; display: flex; margin: 0 1px 1px; border: 1px solid #999; padding: 1px; background: #9f9f9f; }
.mem-clip { flex: 1; overflow: hidden; }
.mem-list { height: calc(100% + 13px); display: flex; flex-direction: column; padding-left: 4px; }
.mem-list div { flex: 1 0 0; min-height: 0; display: flex; }
.mem-list span { width: 37px; color: #fff; font-size: 10px; font-weight: 600; line-height: 22px; }
.mem-list div > span { text-align: center; padding-right: 12px; }
.mem-list button { width: 96px; background: #000; border: 1px solid #6a6a6a; color: #ff0; display: grid; place-items: center; overflow: hidden; }
.mem-list i { font-style: normal; font-size: 10px; line-height: 13px; text-align: left; white-space: nowrap; font-weight: 600; }
.mem-list .plain { background: #f0f0f0; color: #222; }
.mem-list .plain i { font-weight: 400; }
.mem-list div:last-child i { width: 72px; }
.sbar { width: 14px; display: flex; flex-direction: column; background: #f0f0f0; }
.sbar div { flex: 1; background: #cdcdcd; }
.cursor { position: absolute; left: 33px; top: 23px; }
```
FILE: panadapter.js
```js
// Draws the two panadapters: grid, filter band, trace, rulers and waterfall.
const SPAN = 1314;

function rng(seed) {
  return () => {
    seed = (seed + 0x6d2b79f5) | 0;
    let t = Math.imul(seed ^ (seed >>> 15), 1 | seed);
    t = (t + Math.imul(t ^ (t >>> 7), 61 | t)) ^ t;
    return ((t ^ (t >>> 14)) >>> 0) / 4294967296;
  };
}

// Every x below is in display units from 0 to SPAN, every y is a share of the height.
const pans = [
  {
    id: 'pan-a', seed: 7, marker: '#e8e000', band: [662, 828], vgrid: [5, 31], hgrid: [0.105, 0.105],
    db: [[-60, 0.2], [-80, 0.41], [-100, 0.62], [-120, 0.83]],
    freq: { first: 18118, step: 1, at: 519, gap: 62, count: 13 },
    times: [['5s', 0.31], ['10s', 0.635], ['15s', 0.955]],
    base: 0.88, noise: 0.08, pitch: 1.8,
    peaks: [[870, 0.03, 14], [890, 0.09, 14], [1286, 0.12, 3], [918, 0.05, 22], [710, 0.02, 30]],
    fill: (r) => [0, r() < 0.1 ? 18 : 0, 110 + r() * 95],
    rowNoise: 8, cell: 2,
    signals: [
      [737, 28, 0, 0.13, 0.45, 0.9], [760, 60, 0, 0.12, 0.14, 0.5], [820, 60, 0, 0.12, 0.06, 0.4],
      [737, 22, 0.7, 0.97, 0.4, 0.9], [755, 50, 0.74, 0.97, 0.22, 0.6], [805, 50, 0.8, 0.97, 0.12, 0.4],
      [862, 22, 0, 1, 0.24, 0.65], [880, 40, 0, 1, 0.1, 0.5], [900, 110, 0, 0.2, 0.08, 0.4],
      [860, 24, 0.4, 0.6, 0.3, 0.9], [860, 90, 0.42, 0.7, 0.12, 0.5], [870, 90, 0.75, 1, 0.11, 0.45],
      [1150, 3, 0, 1, 0.5, 0.12], [1277, 3, 0.46, 0.5, 1, 1.3], [1277, 3, 0.53, 0.88, 1, 1.3]
    ]
  },
  {
    id: 'pan-b', seed: 21, marker: '#e02020', band: [658, 673], vgrid: [0, 32.8], hgrid: [0.069, 0.069],
    db: [[0, 0.06], [-20, 0.197], [-40, 0.335], [-60, 0.473], [-80, 0.611], [-100, 0.749], [-120, 0.888]],
    freq: { first: 18020, step: 10, at: -11, gap: 65.55, count: 20 },
    times: [['10s', 0.385], ['20s', 0.79]],
    base: 0.89, noise: 0.012, pitch: 2,
    peaks: [[429, 0.19, 2], [433, 0.045, 2], [499, 0.05, 2], [547, 0.05, 2], [565, 0.055, 2], [666, 0.05, 4], [680, 0.05, 4], [688, 0.03, 7],
      [725, 0.04, 3], [738, 0.02, 6], [796, 0.035, 2], [810, 0.03, 3], [823, 0.045, 2], [838, 0.05, 3], [855, 0.03, 3], [908, 0.02, 4], [945, 0.08, 2]],
    fill: (r) => [0, r() < 0.15 ? 26 : 4, 226 + r() * 29],
    rowNoise: 26, cell: 1,
    signals: [
      [428, 3, 0, 0.04, 1, 1.2], [428, 3, 0.16, 0.25, 1, 1.2], [428, 3, 0.36, 0.56, 0.95, 1.3], [428, 3, 0.7, 0.9, 0.9, 1.2],
      [432, 3, 0, 0.1, 0.5, 0.6], [432, 3, 0.27, 0.36, 0.6, 0.8], [432, 3, 0.48, 0.94, 0.9, 1],
      [389, 3, 0.5, 0.6, 1, 1], [389, 3, 0.65, 0.83, 1, 1], [389, 3, 0.84, 0.96, 1, 1], [406, 3, 0.62, 0.76, 0.8, 0.7], [406, 3, 0.85, 0.97, 0.8, 0.5],
      [373, 2, 0, 0.15, 0.7, 0.5], [353, 2, 0, 0.5, 0.5, 0.3], [363, 2, 0.35, 0.46, 0.7, 0.4],
      [547, 2, 0, 0.6, 0.9, 0.5], [564, 3, 0, 0.6, 0.9, 0.6], [499, 2, 0, 0.05, 0.6, 0.3],
      [664, 5, 0, 0.08, 0.8, 1], [668, 10, 0, 0.08, 0.4, 0.6], [664, 4, 0.45, 0.6, 0.9, 1], [668, 10, 0.47, 0.6, 0.4, 0.6], [664, 4, 0.96, 1, 0.8, 1],
      [678, 12, 0, 0.15, 0.5, 0.8], [678, 12, 0.2, 0.97, 0.5, 0.8],
      [721, 3, 0.28, 0.55, 0.9, 0.9], [721, 3, 0.65, 0.68, 1, 0.9], [721, 3, 0.72, 0.8, 1, 0.9], [725, 12, 0.15, 0.2, 0.3, 0.4],
      [795, 5, 0, 1, 0.4, 0.7], [799, 14, 0.05, 0.8, 0.2, 0.5], [823, 4, 0, 0.25, 0.5, 0.5], [823, 3, 0.3, 1, 0.2, 0.4], [757, 15, 0.85, 1, 0.25, 0.5],
      [837, 5, 0, 0.3, 0.4, 0.5], [855, 4, 0.4, 0.96, 0.6, 0.8], [889, 2, 0, 1, 0.3, 0.3], [907, 4, 0, 0.98, 0.8, 0.9], [911, 12, 0, 0.95, 0.25, 0.5], [948, 2, 0, 1, 0.3, 0.6]
    ]
  }
];

function fit(canvas) {
  canvas.width = canvas.clientWidth;
  canvas.height = canvas.clientHeight;
  return canvas.getContext('2d');
}

function drawPlot(pan, canvas) {
  const c = fit(canvas), W = canvas.width, H = canvas.height, k = W / SPAN, r = rng(pan.seed);
  const lg = c.createLinearGradient(0, 0, 0, H);
  lg.addColorStop(0, 'rgba(160,190,205,0.06)');
  lg.addColorStop(0.4, 'rgba(160,190,205,0.42)');
  lg.addColorStop(0.8, 'rgba(160,190,205,0.28)');
  lg.addColorStop(1, 'rgba(160,190,205,0.03)');
  c.fillStyle = lg;
  for (let x = pan.vgrid[0]; x < SPAN - 27; x += pan.vgrid[1]) c.fillRect(Math.round(x * k), 0, 1, H);
  c.fillStyle = 'rgba(160,190,205,0.3)';
  for (let y = pan.hgrid[0]; y < 0.93; y += pan.hgrid[1]) c.fillRect(0, Math.round(y * H), W - 27, 1);
  const bg = c.createLinearGradient(0, 0, 0, H);
  bg.addColorStop(0, 'rgba(0,110,170,0.5)');
  bg.addColorStop(1, 'rgba(0,130,200,0.6)');
  c.fillStyle = bg;
  c.fillRect(pan.band[0] * k, 0, (pan.band[1] - pan.band[0]) * k, H);

  c.beginPath();
  for (let x = 0; x <= SPAN; x += pan.pitch) {
    let y = pan.base + (r() + r() - 1) * pan.noise;
    for (const [px, h, w] of pan.peaks) y -= h * Math.exp(-(((x - px) / w) ** 2));
    c.lineTo(x * k, y * H);
  }
  c.strokeStyle = '#eef4f8';
  c.lineWidth = 1;
  c.stroke();

  c.fillStyle = pan.marker;
  c.fillRect(Math.round(W / 2) - 1, 0, pan.id === 'pan-a' ? 1 : 2, H);
  if (pan.id === 'pan-a') {
    c.fillStyle = '#ff0';
    c.beginPath();
    c.moveTo(W / 2 - 6, 0); c.lineTo(W / 2 + 6, 0); c.lineTo(W / 2, 10);
    c.fill();
  }
}

function drawFall(pan, canvas) {
  const c = fit(canvas), W = canvas.width, H = canvas.height, k = W / SPAN, r = rng(pan.seed + 1);
  const img = c.createImageData(W, H), d = img.data;
  const put = (x, y, R, G, B) => {
    if (x < 0 || y < 0 || x >= W || y >= H) return;
    const i = (y * W + x) * 4;
    d[i] = R; d[i + 1] = G; d[i + 2] = B; d[i + 3] = 255;
  };
  for (let y = 0; y < H; y++) {
    const off = (r() - 0.5) * pan.rowNoise;
    for (let x = 0; x < W; x += pan.cell) {
      const [R, G, B] = pan.fill(r);
      for (let j = 0; j < pan.cell; j++) put(x + j, y, R, G, B + off);
    }
  }
  for (const [sx, sw, y0, y1, density, power] of pan.signals) {
    for (let y = Math.round(y0 * H); y < y1 * H; y++) {
      for (let x = 0; x < sw * k; x += 3) {
        if (r() > density) continue;
        const g = Math.min(255, (110 + r() * 110) * power);
        const b = Math.max(0, 190 - g * 0.75);
        const n = Math.min(3, Math.ceil(sw * k - x));
        for (let j = 0; j < n; j++) put(Math.round(sx * k + x + j), y, 0, g, b);
      }
    }
  }
  c.putImageData(img, 0, 0);
}

function label(parent, text, side, share) {
  const s = document.createElement('span');
  s.textContent = text;
  s.style[side] = share * 100 + '%';
  parent.prepend(s);
}

for (const pan of pans) {
  const root = document.getElementById(pan.id), f = pan.freq;
  for (const [db, y] of pan.db) label(root.querySelector('.scale'), db, 'top', y);
  for (const [t, y] of pan.times) label(root.querySelector('.times'), t, 'top', y);
  for (let i = f.count - 1; i >= 0; i--) {
    label(root.querySelector('.ruler'), ((f.first + i * f.step) / 1000).toFixed(3), 'left', (f.at + i * f.gap) / SPAN);
  }
}

function draw() {
  for (const pan of pans) {
    const root = document.getElementById(pan.id);
    drawPlot(pan, root.querySelector('.plot canvas'));
    drawFall(pan, root.querySelector('.fall canvas'));
  }
}
draw();
addEventListener('resize', draw);
```
